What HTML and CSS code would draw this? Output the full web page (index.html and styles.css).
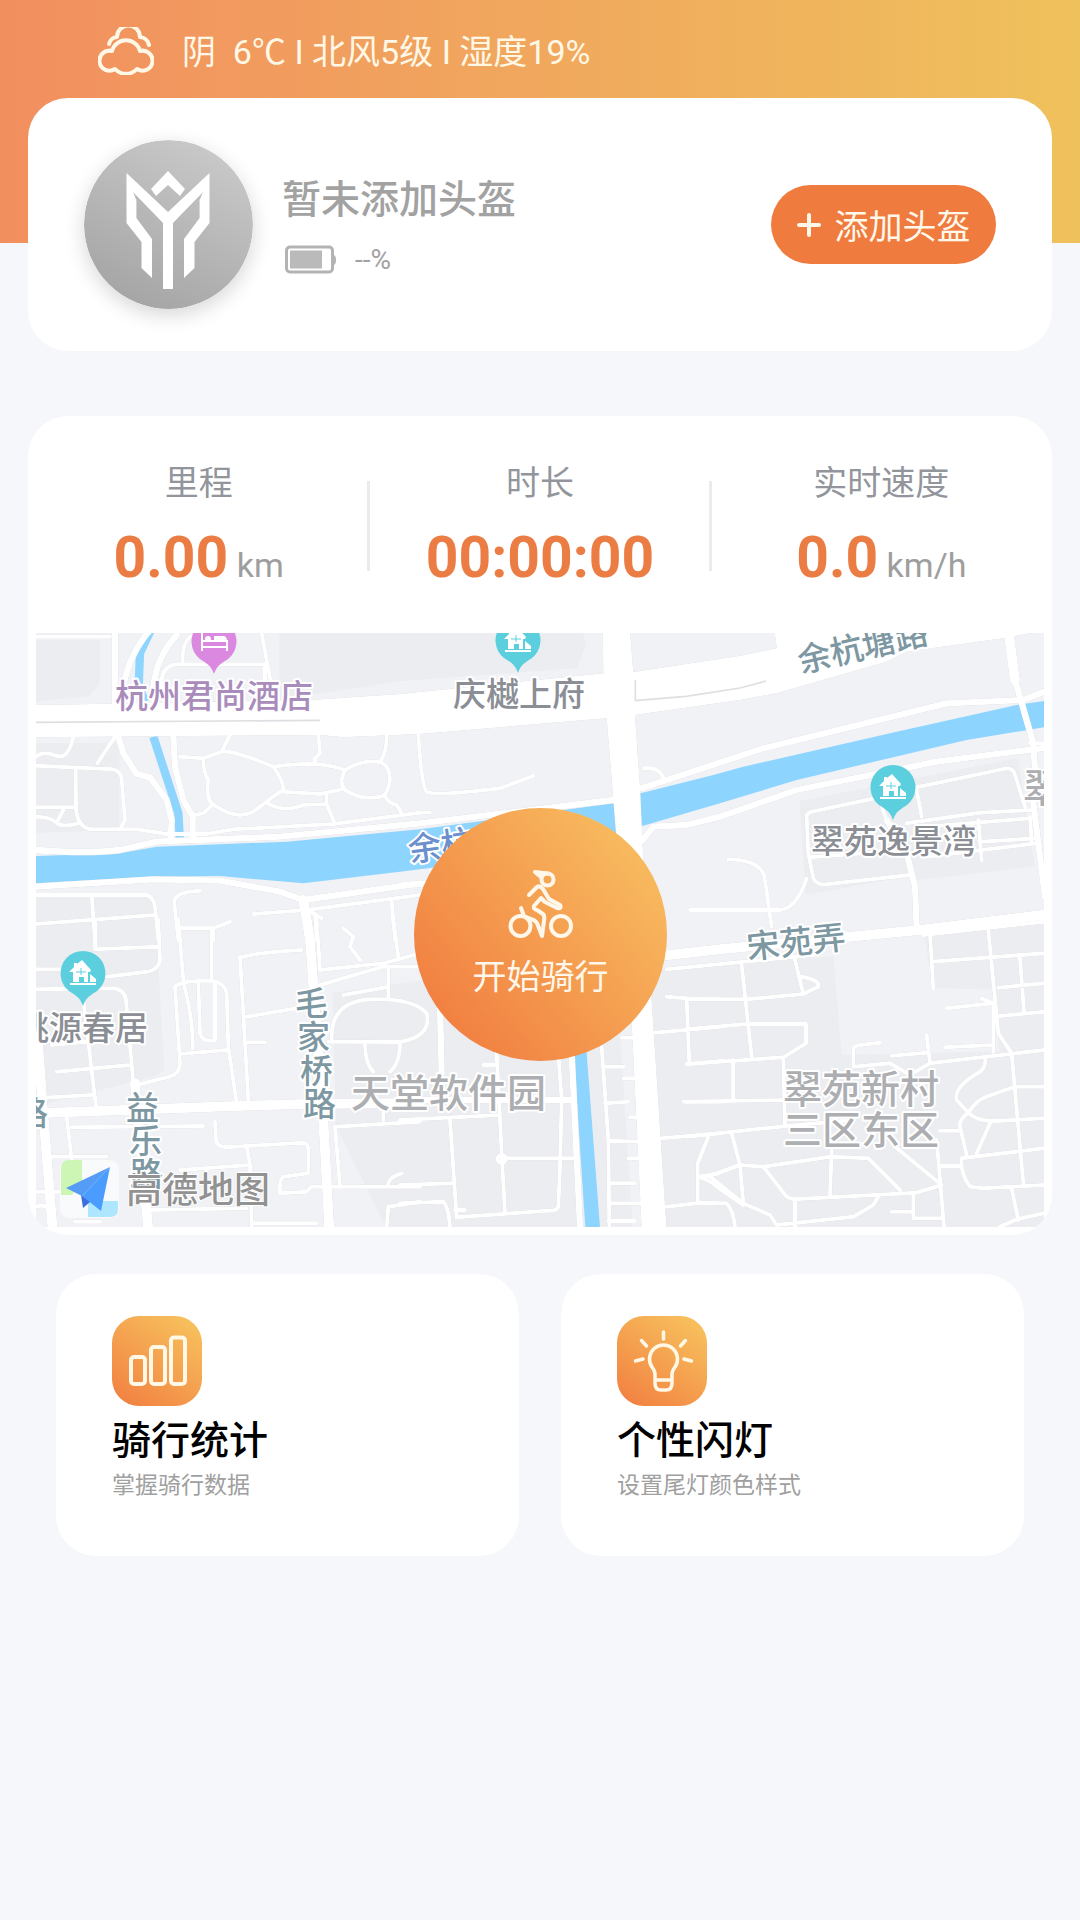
FILE: index.html
```html
<!DOCTYPE html>
<html lang="zh-CN">
<head>
  <meta charset="UTF-8">
  <meta name="viewport" content="width=device-width, initial-scale=1">
  <title>骑行</title>
  <link rel="stylesheet" href="styles.css">
</head>
<body>
  <header class="weather">
    <svg class="weather-icon" width="56" height="48" viewBox="0 0 56 48" fill="none" stroke="#fff8e6" stroke-width="4" stroke-linecap="round" stroke-linejoin="round">
      <path d="M11 17A9 9 0 0 1 19 10A11 11 0 0 1 42 10A10 10 0 0 1 51 18"/>
      <path d="M14 24A14.500 14.500 0 0 1 42 24A10 10 0 1 1 39 42A15 15 0 0 1 17 42A10 10 0 1 1 14 24z"/>
    </svg>
    <span>阴&nbsp; 6℃ I 北风5级 I 湿度19%</span>
  </header>

  <main>
    <section class="card helmet">
      <svg class="helmet-logo" width="169" height="169" viewBox="0 0 169 169">
        <defs>
          <linearGradient id="gray" x1="0.2" y1="1" x2="0.7" y2="0">
            <stop offset="0" stop-color="#a3a3a3"/>
            <stop offset="1" stop-color="#c9c9c9"/>
          </linearGradient>
        </defs>
        <circle cx="84.5" cy="84.5" r="84.5" fill="url(#gray)"/>
        <path fill="#fff" d="M42.500 33L84 72L125.500 33V83L110.500 102V128L100 138V99L115.600 78V60L119 52L89 83V149H79V83L49 52L52.400 60V78L68 99V138L57.500 128V102L42.500 83z"/>
        <path fill="#fff" d="M84 31L101 49L96 56L84 45L72 56L67 49z"/>
      </svg>
      <div class="helmet-info">
        <h1 class="helmet-name">暂未添加头盔</h1>
        <div class="battery">
          <svg width="52" height="30" viewBox="0 0 52 30">
            <rect x="1.500" y="2" width="46" height="25" rx="3.500" fill="none" stroke="#b3b3b3" stroke-width="3"/>
            <rect x="5" y="5.500" width="32" height="18" fill="#bababa"/>
            <path d="M49 10q2 1 2 5t-2 5z" fill="#b3b3b3"/>
          </svg>
          <span>--%</span>
        </div>
      </div>
      <button class="add-btn" type="button">
        <svg width="24" height="24" viewBox="0 0 24 24" stroke="#fff8ea" stroke-width="4" stroke-linecap="round">
          <path d="M12 2V22M2 12H22"/>
        </svg>
        添加头盔
      </button>
    </section>

    <section class="card ride">
      <dl class="stats">
        <div class="stat">
          <dt>里程</dt>
          <dd><b>0.00</b> km</dd>
        </div>
        <div class="stat">
          <dt>时长</dt>
          <dd><b>00:00:00</b></dd>
        </div>
        <div class="stat">
          <dt>实时速度</dt>
          <dd><b>0.0</b> km/h</dd>
        </div>
      </dl>

      <div class="map">
        <svg class="map-svg" viewBox="0 0 1008 594">
          <defs>
            <path id="pin" d="M0 33C-3 24-8 22-14 18A22.500 22.500 0 1 1 14 18C8 22 3 24 0 33z"/>
            <g id="home">
              <use href="#pin" fill="#5ccfdf"/>
              <path fill="#fff" d="M-14-1L-9-6V-10H-6V-9L-1-13L8-3L7-1H5V9H1V4H-4V9H-10V-1zM7 9V1L13 6V9zM-13 10H13V12H-13z"/>
              <path d="M-7-1H3M-2-5V2" stroke="#5ccfdf" stroke-width="1"/>
            </g>
          </defs>

          <g transform="scale(0.33333)">
            <!-- blocks -->
            <g class="blocks">
              <path d="M0 20H192V150L160 190L0 205zM730 0H1640L1650 30L1625 105L1092 145L730 200z"/>
              <path d="M0 330H250V590L0 600zM0 790H355L385 1310L360 1330L0 1420z"/>
              <path d="M2290 505L2945 375L2997 700L2652 741L2620 730L2310 785z"/>
              <path d="M890 1080L1380 1010H1740L1790 1782H1050L900 1480zM1840 1010L2392 970L2417 1265L2890 1255L2872 1070L2692 1065L2662 900L3024 870V1782H1880z"/>
            </g>

            <!-- water -->
            <g class="water">
              <path d="M0 669L252 661L362 641L752 626L1152 589L1732 511L1814 481L2032 426L2122 401L2582 296L2942 216L3024 204V283L2792 321L2282 441L2052 511L1819 579L1700 640L1092 716L802 751L552 729L352 731L0 751z"/>
              <path d="M1600 1061H1640L1652 1261L1692 1782H1648z"/>
              <path class="canal" d="M345-10L312 60L308 160L327 206M352 311L427 541L432 625"/>
            </g>

            <g class="roads">
              <!-- main roads -->
              <path class="area" d="M0 216L822 201L1092 183L1702 121L1700-10H1782L1792 117L2112 68L2222 46L2215-10H3040L2902 16L2612 56L2552 86L2222 181L2112 201L1797 246L1812 461L1822 681L1847 1101L1892 1790H1817L1787 1171L1732 501L1712 256L1152 303L922 313L852 306L0 313z"/>
              <path class="xl" d="M802 801L822 921L862 1461L880 1790M0 1441L602 1419L812 1413L1152 1410M1880 968L2052 949L2652 891L3024 845"/>
              <path class="xl" d="M0 1150L20 1421L50 1790M297 1351L302 1421L337 1790M2918 0L2937 141"/>

              <!-- north west -->
              <g transform="translate(-48 -39)">
                <path class="l" d="M285 40V260M390 30Q330 100 312 190M470 45Q410 110 400 200M295 350L310 400L350 462L390 472L440 540L455 600L452 665M460 345L465 440L490 540L518 590L518 660"/>
                <path class="l" d="M48 690Q200 702 300 690L410 665L780 650L1200 610L1780 540M48 800L400 778L600 782L780 815L850 840L1200 790"/>
                <path d="M48 50H270M520 45Q485 60 488 130M425 200Q420 140 470 133H740M725 40L755 200M735 140V200"/>
                <path d="M48 410Q70 390 110 408Q145 420 160 350M285 350L232 430M48 437L280 448Q305 455 305 480L315 600L300 628M167 445L168 570Q175 620 210 628L350 628L440 642M48 562H160M48 590Q90 590 110 608Q130 625 180 608M130 570L110 608"/>
                <path d="M630 345L605 395L550 415L480 410M605 395Q640 390 760 440Q900 420 975 450M550 415Q550 460 565 480Q555 550 590 560Q650 600 700 575L740 545Q770 520 790 512Q790 480 760 440M580 553L550 580L525 585M790 515L900 522L965 508M740 548Q790 580 850 555L920 552V520M920 552L942 605M895 345L900 400L885 415V430M1100 345Q1100 400 1080 425M1095 528Q1105 550 1130 555L1145 580"/>
                <path d="M975 450Q1030 415 1085 428Q1110 440 1110 480Q1105 515 1090 528Q1030 545 975 510Q955 490 975 450z"/>
                <path d="M440 642H560L640 628L940 612L1200 578L1230 577M700 882L860 870L1200 825M48 825H380Q400 830 405 860L415 960M215 825L225 960M48 912L405 885M540 812Q460 815 463 850L475 960M480 925H580L630 905M580 925V960M870 875L905 895M885 880L890 960M1115 845L1125 960"/>
              </g>

              <!-- north -->
              <g transform="translate(1092 -39)">
                <path class="l" d="M725 505L1090 385L1640 250L1870 240L1940 212M728 660L760 620L860 615L960 590L1190 510L1610 425L1940 383M0 797L80 790"/>
                <path d="M55 345Q65 500 80 515Q100 530 300 505L400 468M730 445Q780 440 790 475M870 870H1140Q1190 865 1220 775M985 718Q1090 720 1095 780L1115 920"/>
              </g>

              <!-- north east -->
              <g transform="translate(2052 -39)">
                <path class="l" d="M885 180L940 370L945 450L940 550L975 830M500 600L560 700L585 800L590 920"/>
                <path d="M480 532L290 572Q260 575 260 590L265 700L280 775Q290 795 320 793L570 765M590 502L860 445Q880 445 885 465L915 560M270 712L560 690M590 510L605 590M485 560L500 600M560 610L780 578L940 570M620 620L930 595M775 600L785 720M780 665L950 655M620 710L950 670M930 590L935 665M930 370H972M610 945L972 905"/>
              </g>

              <!-- south west -->
              <g transform="translate(-48 861)">
                <path d="M225 0V80M415 0L420 120Q415 150 380 155L260 170M48 148H130M225 88L415 80M475 0L490 180M480 25H575V180M660 110L685 540M660 115Q680 100 845 90M680 290L830 265M685 367H735"/>
                <path d="M465 200Q490 180 580 183Q615 190 620 220L625 380L650 550M465 200L480 430Q480 460 450 470L350 495M490 185Q520 300 518 385M535 190L540 340Q550 370 585 360V185M480 402L620 390M48 208L280 205Q315 210 318 240L340 490M110 455L330 435M190 240L228 560M70 533L215 525M95 375L200 365"/>
                <path d="M140 590L155 720M155 622L550 618M80 710H260M585 605L588 660Q590 680 620 682L850 668Q865 670 865 690V760L790 770Q778 775 780 820L860 815L875 800L1200 800M680 680L690 735L480 750M690 735L695 920M560 750V800M945 620L960 800M945 620L1200 605M1090 570V600M1105 790Q1110 770 1145 760M1100 920L1105 860L1200 845M700 910H890M48 860Q85 850 90 880M390 870L680 865M165 905H240M48 815H130"/>
                <path d="M890 0L900 150L1090 130L1200 100M900 195L1090 140H1200M970 25L1000 50L990 80L1020 120M1120 0L1135 110M1105 140V230M970 225L1105 200M935 360Q930 240 1060 238Q1180 235 1220 280Q1235 350 1140 366L925 365M1035 370Q1035 430 1060 455M1140 370Q1140 430 1110 455"/>
              </g>

              <!-- south -->
              <g transform="translate(1092 861)">
                <path class="l" d="M120 260L125 460M0 540H510M515 400L540 920"/>
                <path d="M475 400L485 540L480 740L475 860Q470 875 440 872L170 892L150 600M0 600L300 585M290 400L305 700L315 880M320 715H520M0 795L155 790M0 850L130 845Q145 860 150 920M165 870H195M250 435H290M800 148L1240 105"/>
                <circle cx="305" cy="717" r="12"/>
                <path d="M605 380L625 660L628 920M610 440H670M615 550L685 545M625 662L720 665M625 790H705M625 850H720M625 903H705M665 353H700M670 475H705M690 592H710M685 715H715"/>
                <path d="M800 230L860 235L960 238M860 235L868 432L970 422M765 338L960 320M1000 420V540M850 545H970M785 655L960 640M925 650L893 730V845M893 770Q930 780 950 800L1030 855M893 770L950 762L1020 735M800 860L900 848L980 850Q1000 870 1005 920"/>
              </g>

              <!-- south east -->
              <g transform="translate(2052 861)">
                <path d="M65 135L95 410M-100 238H80L250 222L295 200Q300 180 245 170M225 120L250 222M-100 328L80 312H258V370L190 412L-100 432M190 412L195 620M40 425V540M-100 545L190 540M-100 650L200 618L400 600M35 640L60 735L70 850M-40 770L60 735L130 740L330 710L445 715L540 810M130 740L200 830L220 838L590 818L665 795M335 690L330 830M525 680L665 795M650 660L672 920M665 738H720M660 632H715M-30 770L70 850L150 885L170 915L400 890L460 855L475 830M225 840V920M515 875H580M580 820V895H670"/>
                <path d="M630 45L640 205M635 125L972 100M805 30L835 340L875 400L910 790M900 115L912 275M835 203L972 190M840 288L972 275M680 265L820 250V395M785 235L820 250M675 382L820 375M630 430L972 390M400 440V390Q400 378 420 375L480 368M400 440L510 430L570 465L630 430L620 345M515 407L620 398"/>
                <path d="M795 410Q800 440 780 455Q700 500 710 540L745 578Q715 600 720 620L740 705M745 578Q770 540 800 530L885 500H972M745 578Q770 605 830 603L972 595M810 610L770 700M725 715L972 685M725 715Q720 760 750 800L790 805L972 795M875 805L895 900M840 920L890 898L972 880"/>
              </g>
            </g>

            <!-- medians -->
            <path class="median" d="M0 268L852 262M1797 203L1950 190L2112 165L2190 144M1798 140V203"/>
          </g>

          <g class="place">
            <text class="hotel" x="79" y="75">杭州君尚酒店</text>
            <text x="417" y="73">庆樾上府</text>
            <text x="775" y="220">翠苑逸景湾</text>
            <text x="-20" y="407">桃源春居</text>
          </g>
          <g class="street">
            <text x="765" y="40" transform="rotate(-13 765 40)">余杭塘路</text>
            <text x="712" y="326" transform="rotate(-6 712 326)">宋苑弄</text>
            <text x="259 261 264 267" y="382 416 450 483">毛家桥路</text>
            <text x="90 93 94" y="487 520 553">益乐路</text>
            <text x="-21" y="492">路</text>
          </g>
          <text class="river" x="374" y="229" transform="rotate(-8 374 229)">余杭</text>
          <g class="area-name">
            <text x="315" y="474">天堂软件园</text>
            <text x="747" y="470">翠苑新村</text>
            <text x="747" y="511">三区东区</text>
            <text x="987" y="169">翠</text>
          </g>

          <g transform="translate(178 8)">
            <use href="#pin" fill="#db88e0"/>
            <path d="M-12-9V10M-12 6H13V10M13 6V0H-12" fill="none" stroke="#fff" stroke-width="2"/>
            <circle cx="-6" cy="-2" r="3" fill="#fff"/>
            <path d="M0-5H9Q13-5 13 0H0z" fill="#fff"/>
          </g>
          <use href="#home" x="482" y="7"/>
          <use href="#home" x="857" y="154"/>
          <use href="#home" x="47" y="340"/>

          <!-- map provider -->
          <rect x="24" y="527" width="59" height="58" rx="9" fill="#fff" opacity="0.6"/>
          <path d="M33 527H46V548L36 562H25V536Q25 527 33 527z" fill="#cdf5b3"/>
          <path d="M52 568H82V576Q82 584 74 584H52z" fill="#aee6ff"/>
          <path d="M30 555L74 534L46 563z" fill="#559cf6"/>
          <path d="M74 534L65 578L46 563z" fill="#4a9dff"/>
          <path d="M45 562L54 569L47 575z" fill="#3b6fe0"/>
          <text class="provider" x="90" y="570">高德地图</text>
        </svg>

        <button class="start-btn" type="button">
          <svg width="68" height="74" viewBox="0 0 68 74" fill="none" stroke="#fff8ea" stroke-width="4" stroke-linecap="round" stroke-linejoin="round">
            <circle cx="13.500" cy="58" r="10"/>
            <circle cx="54" cy="58" r="10"/>
            <circle cx="40.500" cy="11.500" r="6"/>
            <path d="M28 4L41 5.500M34 9L28 4"/>
            <path d="M22 27L30 19Q33 17 36 21L42 31L53 37Q55 41 50 40L38 34L34 30L27 38Q26 41 30 42L36 46Q38 48 37 53L35 68L30 55Q28 52 24 51L17 48L14 40"/>
          </svg>
          开始骑行
        </button>
      </div>
    </section>

    <nav class="features">
      <a class="card feature" href="#">
        <svg class="feature-icon" width="90" height="90" viewBox="0 0 90 90" fill="none" stroke="#fff8e6" stroke-width="4">
          <rect x="19" y="41" width="14" height="27" rx="3"/>
          <rect x="39" y="31" width="14" height="37" rx="3"/>
          <rect x="59" y="21.500" width="14" height="46.500" rx="3"/>
        </svg>
        <h2>骑行统计</h2>
        <p>掌握骑行数据</p>
      </a>
      <a class="card feature" href="#">
        <svg class="feature-icon" width="90" height="90" viewBox="0 0 90 90" fill="none" stroke="#fff8e6" stroke-width="3.500" stroke-linecap="round">
          <path d="M38 63V58Q38 55 35 51A14 14 0 1 1 58 51Q55 55 55 58V67Q55 74 49 74H44Q38 74 38 67zM38 64H55"/>
          <path d="M46.500 16V23M24.500 24.500L29.500 30M18.500 45L26 43M68.500 24.500L63.500 30M74.500 45L67 43"/>
        </svg>
        <h2>个性闪灯</h2>
        <p>设置尾灯颜色样式</p>
      </a>
    </nav>
  </main>
</body>
</html>
```
FILE: styles.css
```css
* {
  box-sizing: border-box;
}
body {
  margin: 0;
  padding: 0 28px;
  background: #f6f7fa linear-gradient(90deg, #f28f5f, #efc15c) no-repeat;
  background-size: 100% 243px;
  font-family: Roboto, "Noto Sans CJK SC", sans-serif;
}
h1, h2, p, dl, dd {
  margin: 0;
}
button {
  border: none;
  padding: 0;
  font-family: inherit;
  font-size: 34px;
  color: #fff8ea;
  cursor: pointer;
}
.card {
  background: #fff;
  border-radius: 40px;
}

.weather {
  display: flex;
  align-items: center;
  gap: 28px;
  height: 98px;
  padding: 0 70px;
  font-size: 34px;
  color: #fff8e6;
}
.weather-icon {
  margin-top: 4px;
}

.helmet {
  display: flex;
  align-items: center;
  min-height: 253px;
  padding: 0 56px;
}
.helmet-logo {
  border-radius: 50%;
  box-shadow: 0 6px 20px rgba(0, 0, 0, 0.16);
}
.helmet-info {
  flex: 1;
  padding-left: 29px;
  color: #a2a2a2;
}
.helmet-name {
  font-size: 39px;
  line-height: 56px;
  font-weight: 500;
}
.battery {
  display: flex;
  align-items: center;
  gap: 18px;
  margin-top: 14px;
  padding-left: 3px;
  font-size: 28px;
  line-height: 36px;
}
.add-btn {
  display: flex;
  align-items: center;
  justify-content: center;
  gap: 14px;
  width: 225px;
  height: 79px;
  border-radius: 40px;
  background: #ef7b3f;
}

.ride {
  margin-top: 65px;
  padding: 0 8px 8px;
  overflow: hidden;
}
.stats {
  display: grid;
  grid-template-columns: repeat(3, 1fr);
  margin: 0 -8px;
  padding: 42px 0 25px;
  text-align: center;
}
.stat {
  position: relative;
}
.stat + .stat::before {
  content: "";
  position: absolute;
  left: -2px;
  top: 23px;
  width: 3px;
  height: 90px;
  background: #ebebed;
}
.stat dt {
  font-size: 34px;
  line-height: 50px;
  color: #92959b;
}
.stat dd {
  height: 100px;
  font-size: 34px;
  line-height: 100px;
  color: #9e9e9e;
}
.stat b {
  font-size: 57px;
  color: #eb7c43;
}

.map {
  position: relative;
}
.map-svg {
  display: block;
  width: 100%;
  background: #f1f2f6;
}
.blocks {
  fill: #ebedf0;
}
.water {
  fill: #8dd5ff;
}
.canal {
  fill: none;
  stroke: #8dd5ff;
  stroke-width: 25;
}
.roads {
  fill: none;
  stroke: #fff;
  stroke-width: 12;
  stroke-linecap: round;
  stroke-linejoin: round;
  filter: drop-shadow(0 0 2px #c4c6cc);
}
.roads .area {
  fill: #fff;
  stroke: none;
}
.roads .l {
  stroke-width: 19;
}
.roads .xl {
  stroke-width: 30;
}
.median {
  fill: none;
  stroke: #dedfe2;
  stroke-width: 5;
}
.map-svg text {
  font-family: "Noto Sans CJK SC", sans-serif;
  font-size: 33px;
  font-weight: 500;
  stroke: #fff;
  stroke-width: 4px;
  stroke-linejoin: round;
  paint-order: stroke;
}
.place {
  fill: #8b8e95;
}
.place .hotel {
  fill: #a98cbb;
}
.street {
  fill: #7d98a2;
}
.river {
  fill: #6c8fce;
}
.map-svg .area-name text {
  font-size: 39px;
  fill: #adaeb1;
}
.map-svg .provider {
  font-size: 36px;
  fill: #929292;
  stroke-width: 2px;
}
.start-btn {
  position: absolute;
  top: 175px;
  left: 50%;
  display: flex;
  flex-direction: column;
  align-items: center;
  gap: 8px;
  width: 253px;
  height: 253px;
  margin-left: -126px;
  padding-top: 60px;
  border-radius: 50%;
  background: linear-gradient(50deg, #f17d40 10%, #f8bd60 90%);
}

.features {
  display: grid;
  grid-template-columns: 1fr 1fr;
  gap: 42px;
  margin: 39px 28px;
}
.feature {
  min-height: 282px;
  padding: 42px 56px;
  color: #000;
  text-decoration: none;
}
.feature-icon {
  display: block;
  border-radius: 27px;
  background: linear-gradient(35deg, #f17d40, #f8c65f);
}
.feature h2 {
  margin-top: 7px;
  font-size: 39px;
  line-height: 56px;
  font-weight: 500;
}
.feature p {
  font-size: 23px;
  line-height: 34px;
  color: #a0a0a0;
}
```
